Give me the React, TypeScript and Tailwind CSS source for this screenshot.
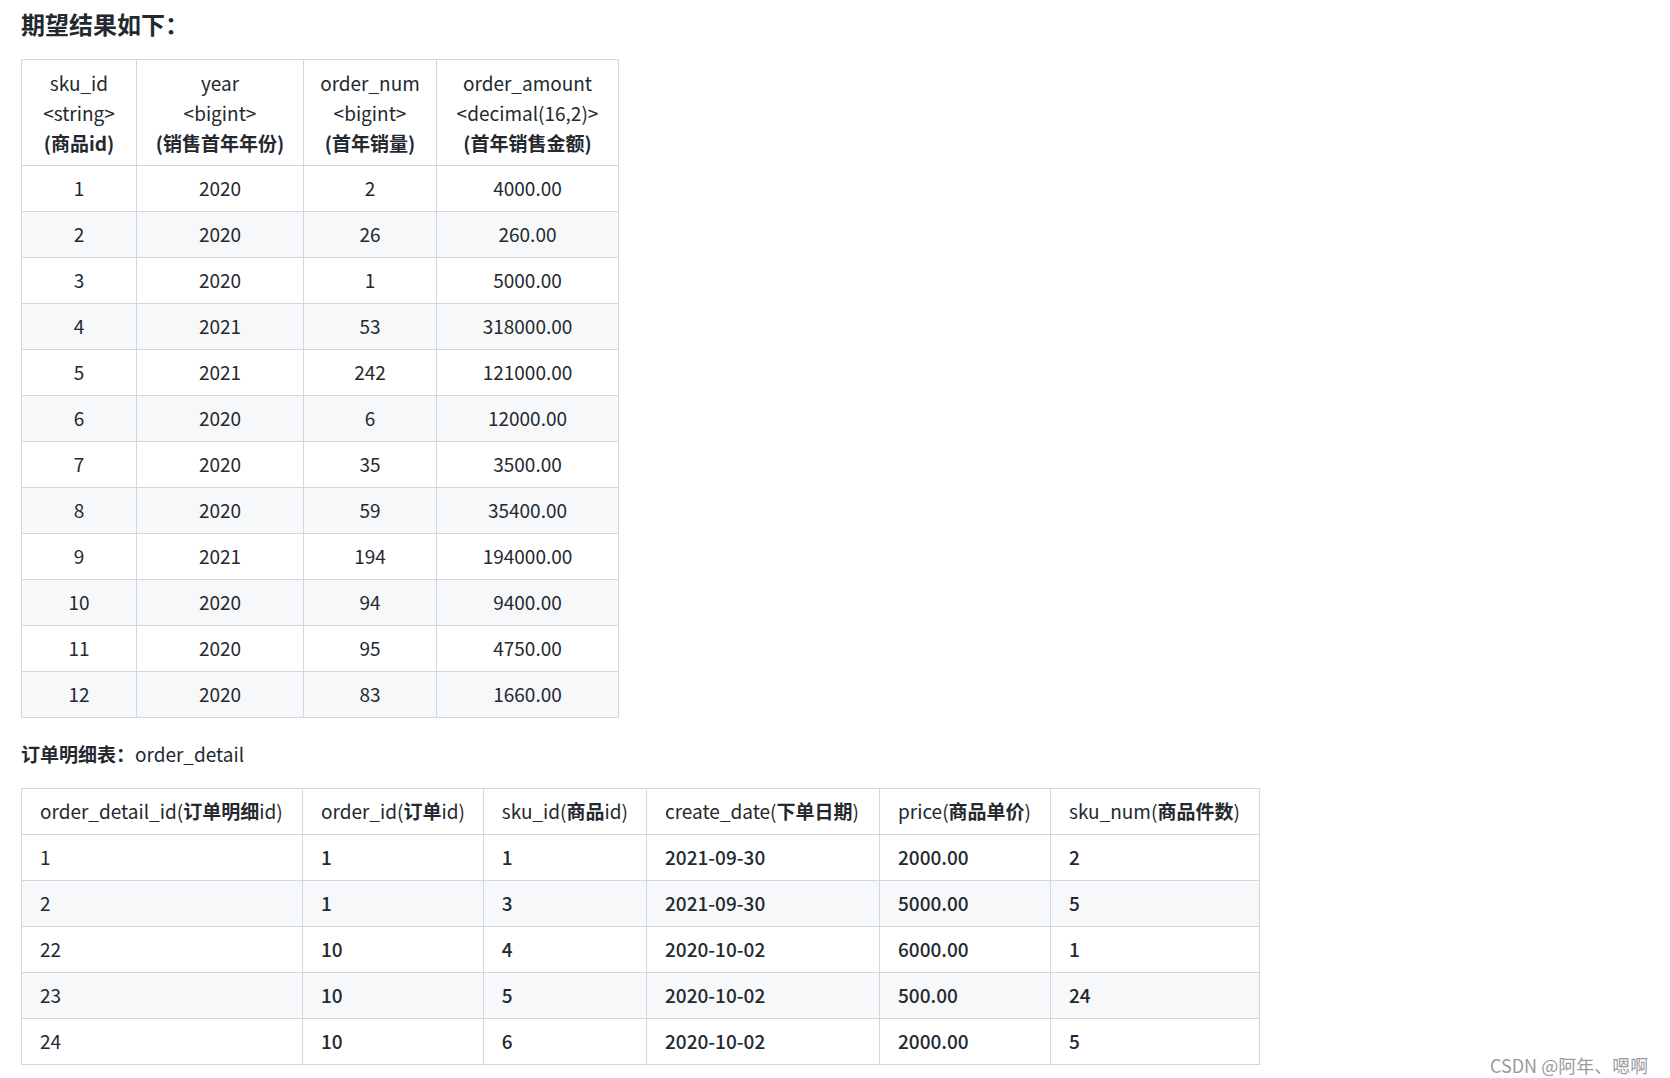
const t1Head = [
  ['sku_id', '<string>', '(商品id)'],
  ['year', '<bigint>', '(销售首年年份)'],
  ['order_num', '<bigint>', '(首年销量)'],
  ['order_amount', '<decimal(16,2)>', '(首年销售金额)'],
]
const t1Widths = ['w-[115px]', 'w-[167px]', 'w-[133px]', 'w-[182px]']
const t1Rows = [
  ['1', '2020', '2', '4000.00'],
  ['2', '2020', '26', '260.00'],
  ['3', '2020', '1', '5000.00'],
  ['4', '2021', '53', '318000.00'],
  ['5', '2021', '242', '121000.00'],
  ['6', '2020', '6', '12000.00'],
  ['7', '2020', '35', '3500.00'],
  ['8', '2020', '59', '35400.00'],
  ['9', '2021', '194', '194000.00'],
  ['10', '2020', '94', '9400.00'],
  ['11', '2020', '95', '4750.00'],
  ['12', '2020', '83', '1660.00'],
]
const t2Head: [string, string, string][] = [
  ['order_detail_id(', '订单明细', 'id)'],
  ['order_id(', '订单', 'id)'],
  ['sku_id(', '商品', 'id)'],
  ['create_date(', '下单日期', ')'],
  ['price(', '商品单价', ')'],
  ['sku_num(', '商品件数', ')'],
]
const t2Widths = ['w-[281px]', 'w-[180px]', 'w-[160px]', 'w-[233px]', 'w-[171px]', 'w-[209px]']
const t2Rows = [
  ['1', '1', '1', '2021-09-30', '2000.00', '2'],
  ['2', '1', '3', '2021-09-30', '5000.00', '5'],
  ['22', '10', '4', '2020-10-02', '6000.00', '1'],
  ['23', '10', '5', '2020-10-02', '500.00', '24'],
  ['24', '10', '6', '2020-10-02', '2000.00', '5'],
]

export default function App() {
  return (
    <div className="relative w-[1670px] h-[1078px] bg-white text-[#24292f] pl-[21px] pt-[6px]" style={{ fontFamily: '"Noto Sans CJK SC", "Noto Sans", sans-serif' }}>
      <h2 className="text-[24px] font-bold leading-[36px]">期望结果如下：</h2>
      <table className="mt-[17px] border-collapse text-[19px] text-center">
        <thead>
          <tr>
            {t1Head.map((h, i) => (
              <th key={i} className={`${t1Widths[i]} h-[106px] border border-[#d0d7de] font-normal leading-[30px]`}>
                <div>{h[0]}</div>
                <div>{h[1]}</div>
                <div className="font-bold">{h[2]}</div>
              </th>
            ))}
          </tr>
        </thead>
        <tbody>
          {t1Rows.map((r, i) => (
            <tr key={i} className={i % 2 === 1 ? 'bg-[#f6f8fa]' : ''}>
              {r.map((c, j) => (
                <td key={j} className="h-[46px] border border-[#d0d7de]">{c}</td>
              ))}
            </tr>
          ))}
        </tbody>
      </table>
      <p className="mt-[22px] text-[19px] leading-[28px]"><b>订单明细表：</b>order_detail</p>
      <table className="mt-[20px] border-collapse text-[19px] text-left">
        <thead>
          <tr>
            {t2Head.map((h, i) => (
              <th key={i} className={`${t2Widths[i]} h-[46px] border border-[#d0d7de] font-normal px-[18px] whitespace-nowrap`}>
                {h[0]}<b>{h[1]}</b>{h[2]}
              </th>
            ))}
          </tr>
        </thead>
        <tbody>
          {t2Rows.map((r, i) => (
            <tr key={i} className={i % 2 === 1 ? 'bg-[#f6f8fa]' : ''}>
              {r.map((c, j) => (
                <td key={j} className={`h-[46px] border border-[#d0d7de] px-[18px] ${j > 0 ? 'font-medium' : ''}`}>{c}</td>
              ))}
            </tr>
          ))}
        </tbody>
      </table>
      <div className="absolute left-[1490px] top-[1052px] text-[18px] text-[#9a9a9a]">CSDN @阿年、嗯啊</div>
    </div>
  )
}
